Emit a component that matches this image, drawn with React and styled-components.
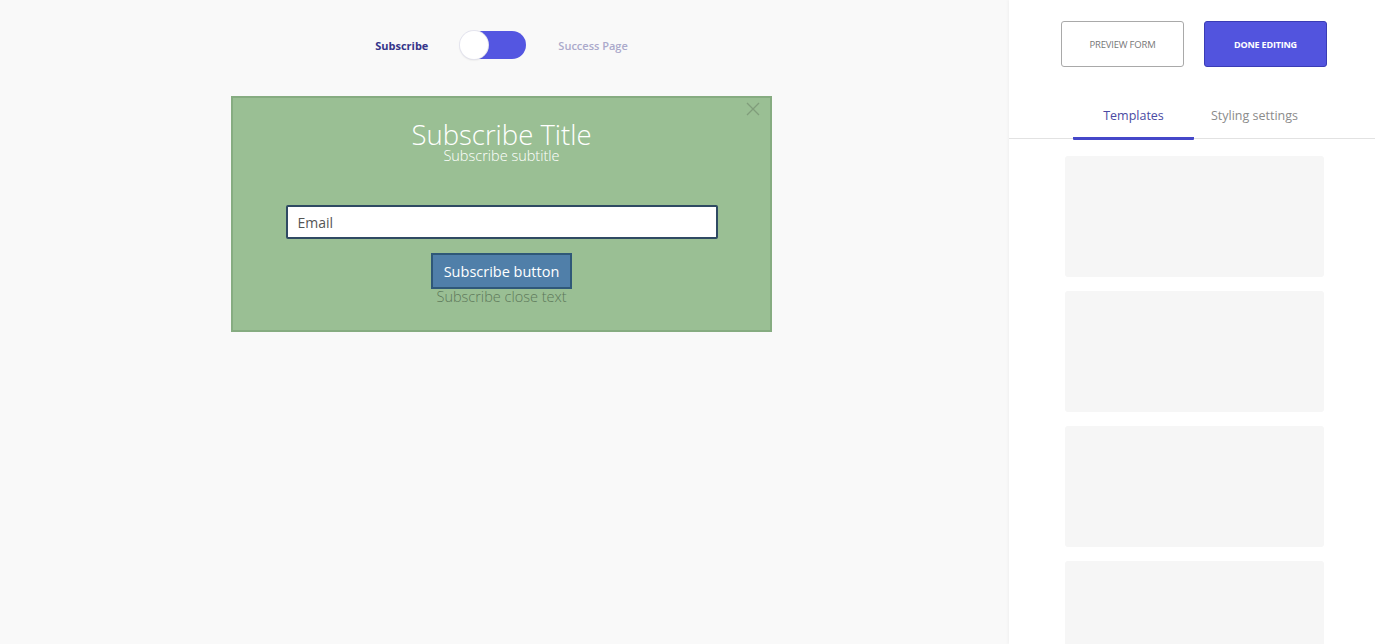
import React, { useState } from 'react';
import styled, { createGlobalStyle } from 'styled-components';

const GlobalStyle = createGlobalStyle`
  html, body {
    margin: 0;
    padding: 0;
    height: 100%;
    background: #f9f9f9;
  }
  #root {
    height: 100%;
  }
  * {
    box-sizing: border-box;
  }
`;

const templates = [1, 2, 3, 4];

export default function App() {
  const [tab, setTab] = useState('templates');

  return (
    <>
      <GlobalStyle />
      <StyledPage>
        <StyledEditor>
          <StyledModeRow>
            <StyledModeLabel active>Subscribe</StyledModeLabel>
            <StyledToggle>
              <StyledKnob />
            </StyledToggle>
            <StyledModeLabel>Success Page</StyledModeLabel>
          </StyledModeRow>

          <StyledForm>
            <StyledClose>
              <svg width="14" height="14" viewBox="0 0 14 14">
                <path d="M1 1L13 13M13 1L1 13" stroke="#809d7b" strokeWidth="1.3" fill="none" />
              </svg>
            </StyledClose>
            <StyledTitle>Subscribe Title</StyledTitle>
            <StyledSubtitle>Subscribe subtitle</StyledSubtitle>
            <StyledEmail type="text" placeholder="Email" readOnly />
            <StyledSubmit type="button">Subscribe button</StyledSubmit>
            <StyledCloseText>Subscribe close text</StyledCloseText>
          </StyledForm>
        </StyledEditor>

        <StyledSidebar>
          <StyledActions>
            <StyledActionButton>PREVIEW FORM</StyledActionButton>
            <StyledActionButton primary>DONE EDITING</StyledActionButton>
          </StyledActions>

          <StyledTabs>
            <StyledTab active={tab === 'templates'} onClick={() => setTab('templates')}>
              Templates
            </StyledTab>
            <StyledTab active={tab === 'styling'} onClick={() => setTab('styling')}>
              Styling settings
            </StyledTab>
          </StyledTabs>

          <StyledTemplateList>
            {templates.map(t => (
              <StyledTemplateCard key={t} />
            ))}
          </StyledTemplateList>
        </StyledSidebar>
      </StyledPage>
    </>
  );
}

const StyledPage = styled.div`
  display: flex;
  height: 100%;
  overflow: hidden;
  font-family: 'Open Sans', 'Liberation Sans', sans-serif;
`;

const StyledEditor = styled.main`
  flex: 1;
  display: flex;
  flex-direction: column;
  align-items: center;
  padding: 31px 6px 0 0;
  background: #f9f9f9;
`;

const StyledModeRow = styled.div`
  display: flex;
  align-items: center;
  gap: 32px;
  height: 28px;
`;

const StyledModeLabel = styled.span`
  font-size: 11px;
  font-weight: ${p => (p.active ? 700 : 600)};
  color: ${p => (p.active ? '#35358a' : '#aba9cb')};
`;

const StyledToggle = styled.div`
  position: relative;
  width: 66px;
  height: 28px;
  border-radius: 14px;
  background: #5456e1;
`;

const StyledKnob = styled.div`
  position: absolute;
  left: 0;
  top: 0;
  width: 28px;
  height: 28px;
  border-radius: 50%;
  background: #fff;
  box-shadow: 0 0 0 1px #e4e4ee, 0 1px 2px rgba(0, 0, 0, 0.15);
`;

const StyledForm = styled.div`
  position: relative;
  display: flex;
  flex-direction: column;
  align-items: center;
  width: 541px;
  height: 236px;
  margin-top: 37px;
  padding-top: 23px;
  background: #9abf94;
  border: 2px solid #86ac81;
`;

const StyledClose = styled.div`
  position: absolute;
  top: 4px;
  right: 10px;
  width: 14px;
  height: 14px;
  display: flex;
`;

const StyledTitle = styled.h1`
  margin: 0;
  font-size: 27.5px;
  font-weight: 300;
  line-height: 28px;
  color: #fff;
`;

const StyledSubtitle = styled.p`
  margin: 0;
  font-size: 14.5px;
  font-weight: 300;
  line-height: 14px;
  color: #fff;
`;

const StyledEmail = styled.input`
  width: 432px;
  height: 34px;
  margin-top: 42px;
  padding: 0 10px;
  border: 2px solid #2f4a63;
  border-radius: 2px;
  background: #fff;
  font-family: 'Open Sans', 'Liberation Sans', sans-serif;
  font-size: 14px;
  outline: none;
  &::placeholder {
    color: #555;
  }
`;

const StyledSubmit = styled.button`
  width: 141px;
  height: 36px;
  margin-top: 14px;
  padding: 0;
  border: 2px solid #2f5878;
  background: #507fa9;
  color: #fff;
  font-family: 'Open Sans', 'Liberation Sans', sans-serif;
  font-size: 14.5px;
  cursor: pointer;
`;

const StyledCloseText = styled.p`
  margin: 0;
  font-size: 14.5px;
  font-weight: 300;
  line-height: 16px;
  color: #5d785a;
`;

const StyledSidebar = styled.aside`
  width: 366px;
  flex-shrink: 0;
  display: flex;
  flex-direction: column;
  background: #fff;
  box-shadow: -1px 0 3px rgba(0, 0, 0, 0.04);
`;

const StyledActions = styled.div`
  display: flex;
  justify-content: center;
  gap: 20px;
  padding: 21px 0 0 4px;
`;

const StyledActionButton = styled.button`
  width: 123px;
  height: 46px;
  border-radius: 3px;
  border: 1px solid ${p => (p.primary ? '#3a3cb5' : '#a9a9a9')};
  background: ${p => (p.primary ? '#5254de' : '#fff')};
  color: ${p => (p.primary ? '#fff' : '#777')};
  font-family: 'Open Sans', 'Liberation Sans', sans-serif;
  font-size: ${p => (p.primary ? '9px' : '9.5px')};
  font-weight: ${p => (p.primary ? 700 : 400)};
  letter-spacing: -0.2px;
  cursor: pointer;
`;

const StyledTabs = styled.div`
  display: flex;
  justify-content: center;
  margin-top: 35px;
  padding-left: 4px;
  border-bottom: 1px solid #e2e2e2;
`;

const StyledTab = styled.div`
  width: 121px;
  height: 38px;
  padding-top: 5px;
  margin-bottom: -2px;
  text-align: center;
  font-size: 12.5px;
  color: ${p => (p.active ? '#4a4aa3' : '#8b8b8b')};
  border-bottom: 3px solid ${p => (p.active ? '#4547c9' : 'transparent')};
  border-radius: 1px;
  cursor: pointer;
`;

const StyledTemplateList = styled.div`
  display: flex;
  flex-direction: column;
  align-items: center;
  gap: 14px;
  padding: 17px 0 0 5px;
`;

const StyledTemplateCard = styled.div`
  flex-shrink: 0;
  width: 259px;
  height: 121px;
  border-radius: 3px;
  background: #f6f6f6;
`;
